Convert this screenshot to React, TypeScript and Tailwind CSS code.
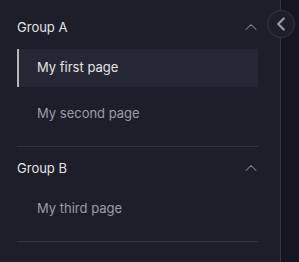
import { ChevronLeft, ChevronUp } from "lucide-react";

type Page = { id: string; label: string; active?: boolean };
type Group = { id: string; title: string; pages: Page[] };

const groups: Group[] = [
  {
    id: "a",
    title: "Group A",
    pages: [
      { id: "first", label: "My first page", active: true },
      { id: "second", label: "My second page" },
    ],
  },
  {
    id: "b",
    title: "Group B",
    pages: [{ id: "third", label: "My third page" }],
  },
];

function NavGroup({ group, first }: { group: Group; first: boolean }) {
  return (
    <div className={first ? "pt-[8px]" : "pt-[2px]"}>
      <div className="flex h-[38px] items-center justify-between">
        <span className="pt-[1px] text-[13px] text-[#e2e2e6]">{group.title}</span>
        <ChevronUp className="mr-[-3px] h-[20px] w-[20px] text-[#85868f]" strokeWidth={1.25} />
      </div>
      <ul className="mt-[3px] flex flex-col gap-[8px]">
        {group.pages.map((page) => (
          <li
            key={page.id}
            className={
              page.active
                ? "flex h-[38px] items-center border-l-2 border-[#b5b6bc] bg-[#262734] pl-[18px] text-[13px] text-[#e4e4e8]"
                : "flex h-[38px] items-center pl-[20px] text-[13px] text-[#9b9ca4]"
            }
          >
            {page.label}
          </li>
        ))}
      </ul>
      <div className="mt-[13px] h-px bg-[#33343f]" />
    </div>
  );
}

export default function App() {
  return (
    <div
      className="flex h-[262px] w-[299px] bg-[#15161f]"
      style={{ fontFamily: "Inter, 'Noto Sans', sans-serif" }}
    >
      <aside className="relative h-full w-[281px] border-r border-[#33343f] bg-[#1d1e2a] pl-[17px] pr-[22px]">
        {groups.map((group, i) => (
          <NavGroup key={group.id} group={group} first={i === 0} />
        ))}
        <button className="absolute right-[-15px] top-[10px] flex h-[28px] w-[28px] items-center justify-center rounded-full border border-[#363743] bg-[#1d1e2a] text-[#9a9ba3]">
          <ChevronLeft className="h-[22px] w-[22px]" strokeWidth={2.5} />
        </button>
      </aside>
    </div>
  );
}
